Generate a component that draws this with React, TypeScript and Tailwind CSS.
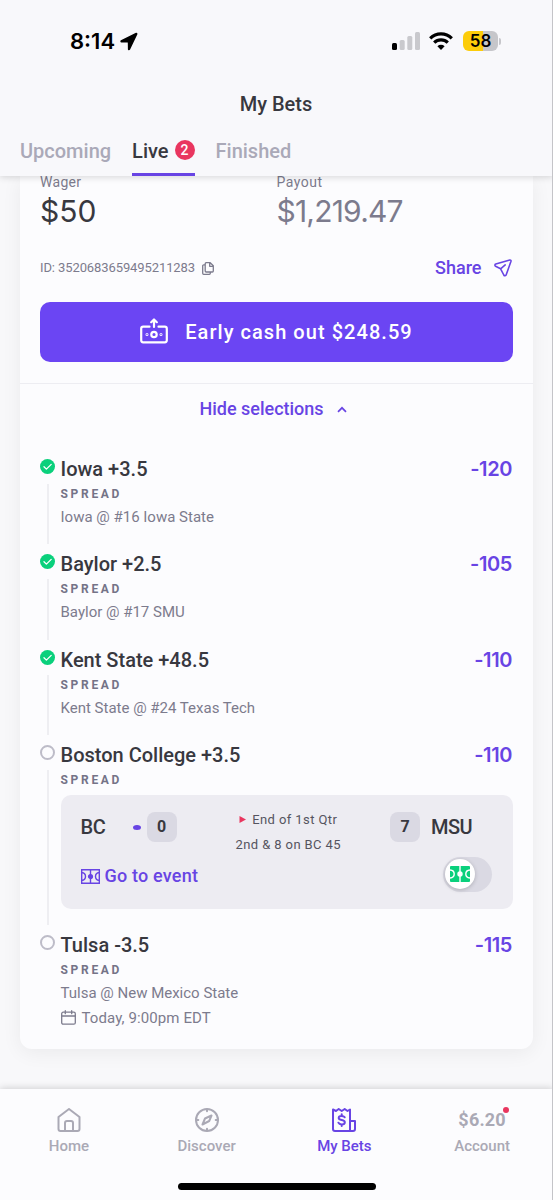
import type { ReactNode } from "react";

type Selection = {
  name: string;
  odds: string;
  matchup?: string;
  date?: string;
  won?: boolean;
  live?: boolean;
};

const selections: Selection[] = [
  { name: "Iowa +3.5", odds: "-120", matchup: "Iowa @ #16 Iowa State", won: true },
  { name: "Baylor +2.5", odds: "-105", matchup: "Baylor @ #17 SMU", won: true },
  {
    name: "Kent State +48.5",
    odds: "-110",
    matchup: "Kent State @ #24 Texas Tech",
    won: true,
  },
  { name: "Boston College +3.5", odds: "-110", live: true },
  {
    name: "Tulsa -3.5",
    odds: "-115",
    matchup: "Tulsa @ New Mexico State",
    date: "Today, 9:00pm EDT",
  },
];

function StatusBar() {
  return (
    <div className="flex h-[82px] items-center justify-between pl-[70px] pr-[52px]">
      <div className="flex items-center gap-[5px] font-[Inter] text-[22px] font-semibold text-black">
        8:14
        <svg className="h-[19px] w-[18px]" viewBox="0 0 18 19" fill="currentColor">
          <path d="M16 .8.9 8.3c-.9.5-.7 2.2.5 2.2l6 .1c.3 0 .4.1.4.4l.1 6.2c0 1.3 1.7 1.5 2.2.3L17.4 2.2c.3-.9-.5-1.8-1.4-1.4z" />
        </svg>
      </div>
      <div className="flex items-center">
        <svg className="mr-[9px] h-[18px] w-7" viewBox="0 0 28 18">
          <rect x="0" y="11" width="5" height="7" rx="1.5" fill="#000" />
          <rect x="7.7" y="8" width="5" height="10" rx="1.5" fill="#c9c9cd" />
          <rect x="15.3" y="4" width="5" height="14" rx="1.5" fill="#c9c9cd" />
          <rect x="23" y="0" width="5" height="18" rx="1.5" fill="#c9c9cd" />
        </svg>
        <svg className="mr-2.5 h-[18px] w-6" viewBox="0 0 24 18" fill="none" stroke="#000" strokeWidth="3.2">
          <path d="M1.2 6.3a15.5 15.5 0 0 1 21.6 0" />
          <path d="M5.2 10.6a9.7 9.7 0 0 1 13.6 0" />
          <path d="M12 18 8.4 14.3a5.2 5.2 0 0 1 7.2 0z" fill="#000" stroke="none" />
        </svg>
        <div className="flex h-5 w-[35px] items-center justify-center rounded-[6px] bg-linear-to-r from-[#fccc0a] from-58% to-[#c6c6ca] to-58% font-[Inter] text-[17px] font-semibold leading-5 text-black">
          58
        </div>
        <div className="ml-px h-[7px] w-0.5 rounded-r-full bg-[#c6c6ca]" />
      </div>
    </div>
  );
}

function Header() {
  return (
    <header className="relative z-10 h-44 bg-[#f8f8fb] shadow-[0_1px_7px_rgba(0,0,0,0.16)]">
      <StatusBar />
      <h1 className="pr-px pt-2 text-center text-xl font-medium text-[#38383f]">My Bets</h1>
      <nav className="flex h-[58px] gap-[21px] pl-5 pt-[5px] text-xl font-medium leading-[56px] text-[#aaa9b8]">
        <span>Upcoming</span>
        <span className="flex items-center border-b-[3px] border-[#6844e4] pt-1.5 text-[#38383f]">
          Live
          <span className="mb-0.5 ml-1.5 flex size-5 items-center justify-center rounded-full bg-[#e9365f] text-sm text-white">
            2
          </span>
        </span>
        <span>Finished</span>
      </nav>
    </header>
  );
}

function CashOutIcon() {
  return (
    <svg className="mb-[3px] h-[26px] w-7" viewBox="0 0 28 26" fill="none" stroke="currentColor" strokeWidth="2.2" strokeLinecap="round" strokeLinejoin="round">
      <path d="M9.5 8.7H3.2a2 2 0 0 0-2 2v11.6a2 2 0 0 0 2 2h21.6a2 2 0 0 0 2-2V10.7a2 2 0 0 0-2-2h-6.3M14 9V2M11.2 4.2 14 1.5l2.8 2.7" />
      <circle cx="14" cy="16.5" r="2.7" />
      <circle cx="7" cy="16.5" r="0.4" />
      <circle cx="21" cy="16.5" r="0.4" />
    </svg>
  );
}

function CopyIcon() {
  return (
    <svg className="h-[13px] w-3" viewBox="0 0 12 13" fill="none" stroke="currentColor" strokeWidth="1.3" strokeLinejoin="round">
      <path d="M4.2.7h4L11.3 3.8v5.2a1 1 0 0 1-1 1H4.2a1 1 0 0 1-1-1V1.7a1 1 0 0 1 1-1zM7.7.9v3.4h3.5" />
      <path d="M3 2.8H1.7a1 1 0 0 0-1 1v7.5a1 1 0 0 0 1 1h5.6a1 1 0 0 0 1-1V10" />
    </svg>
  );
}

function PlaneIcon() {
  return (
    <svg className="size-[18px]" viewBox="0 0 18 18" fill="none" stroke="currentColor" strokeWidth="1.6" strokeLinecap="round" strokeLinejoin="round">
      <path d="M15.8 1 1.8 5c-1.1.3-1.2 1.7-.2 2.2l5 2.600 3.200 6.200c.6 1.100 2.100 1 2.400-.2L17 2.200c.2-.8-.4-1.400-1.200-1.200zM6.600 9.800l4.600-3.900" />
    </svg>
  );
}

function PitchIcon() {
  return (
    <svg className="h-[15px] w-[19px]" viewBox="0 0 19 15" fill="none" stroke="currentColor" strokeWidth="1.4">
      <path d="M.7.7h17.6v13.6H.7zM9.5.7v13.6M.7 3.5c2.4.3 3.8 2 3.8 4s-1.4 3.7-3.8 4M18.3 3.5c-2.4.3-3.8 2-3.8 4s1.4 3.7 3.8 4" />
      <circle cx="9.5" cy="7.5" r="1.9" fill="currentColor" />
    </svg>
  );
}

function StatusDot({ won }: { won?: boolean }) {
  if (!won) {
    return <div className="size-[15px] rounded-full border-2 border-[#bdbcc8]" />;
  }
  return (
    <svg className="size-[15px]" viewBox="0 0 15 15" fill="none">
      <circle cx="7.5" cy="7.5" r="7.5" fill="#0ad07c" />
      <path d="m4 7.8 2.4 2.3 4.8-4.7" stroke="#fff" strokeWidth="1.3" strokeLinecap="round" strokeLinejoin="round" />
    </svg>
  );
}

function Score({ children }: { children: ReactNode }) {
  return (
    <span className="flex size-[30px] items-center justify-center rounded-lg bg-[#dad9e3] text-base font-bold text-[#38383f]">
      {children}
    </span>
  );
}

function LivePanel() {
  return (
    <div className="mt-[5px] h-[114px] rounded-[10px] bg-[#edecf2] pl-5 pr-[21px] pt-4">
      <div className="flex h-8 items-center justify-between">
        <div className="flex items-center">
          <span className="w-[52px] text-xl font-medium tracking-[-0.5px]">BC</span>
          <span className="mr-1.5 h-[5px] w-2 rounded-[50%] bg-[#6844e4]" />
          <Score>0</Score>
        </div>
        <div className="ml-2.5 mt-2.5 flex flex-col items-center text-[13px] leading-[25px] tracking-[0.4px] text-[#55545f]">
          <span className="flex items-center gap-1.5">
            <svg className="h-[7px] w-[7px]" viewBox="0 0 7 7" fill="#e9365f">
              <path d="M.5 0 7 3.5.5 7z" />
            </svg>
            End of 1st Qtr
          </span>
          <span>2nd &amp; 8 on BC 45</span>
        </div>
        <div className="flex w-[102px] items-center gap-[11px]">
          <Score>7</Score>
          <span className="text-xl font-medium tracking-[-0.5px]">MSU</span>
        </div>
      </div>
      <div className="mt-[13px] flex h-9 items-center justify-between">
        <div className="flex items-center gap-[5px] pt-1 text-lg font-medium tracking-[0.2px] text-[#6844e4]">
          <PitchIcon />
          Go to event
        </div>
        <div className="flex h-[35px] w-[49px] items-center rounded-full bg-[#dad9e3] pl-0.5">
          <div className="flex size-[30px] items-center justify-center rounded-full bg-white shadow-[0_1px_4px_rgba(0,0,0,0.2)]">
            <svg className="h-4 w-5" viewBox="0 0 20 16" fill="none" stroke="#fff" strokeWidth="1.4">
              <rect width="20" height="16" rx="1" fill="#0ad07c" stroke="none" />
              <path d="M10 0v16M0 4c2.6.2 4.2 1.8 4.2 4S2.6 11.8 0 12M20 4c-2.6.2-4.2 1.8-4.2 4s1.6 3.8 4.2 4" />
              <circle cx="10" cy="8" r="2" fill="#fff" />
            </svg>
          </div>
        </div>
      </div>
    </div>
  );
}

function SelectionRow({ item, last }: { item: Selection; last: boolean }) {
  return (
    <li className={item.live ? "flex h-[189.5px]" : "flex h-[95.5px]"}>
      <div className="flex w-[20.5px] shrink-0 flex-col items-start pt-0.5">
        <StatusDot won={item.won} />
        {!last && <div className="mb-2 ml-[6.5px] mt-2.5 w-[2.5px] flex-1 bg-[#eeeef2]" />}
      </div>
      <div className="min-w-0 flex-1 text-[#38383f]">
        <div className="flex h-6 items-center justify-between text-xl font-medium">
          <span>{item.name}</span>
          <span className="pr-px font-[Inter] text-xl font-semibold tracking-[-0.4px] text-[#6844e4]">
            {item.odds}
          </span>
        </div>
        <p className="mt-[3px] text-xs font-bold leading-5 tracking-[2.7px] text-[#747387]">SPREAD</p>
        {item.matchup && (
          <p className="mt-[3px] text-[15px] leading-5 text-[#7c7b8d]">{item.matchup}</p>
        )}
        {item.date && (
          <p className="mt-[5px] flex items-center gap-1.5 text-[15px] leading-5 tracking-[0.1px] text-[#7c7b8d]">
            <svg className="h-[15px] w-[15px]" viewBox="0 0 15 15" fill="none" stroke="currentColor" strokeWidth="1.3" strokeLinecap="round">
              <rect x=".7" y="2.2" width="13.6" height="12" rx="1.5" />
              <path d="M.7 6h13.6M4.3.7v3M10.7.7v3" />
            </svg>
            {item.date}
          </p>
        )}
        {item.live && <LivePanel />}
      </div>
    </li>
  );
}

function BetCard() {
  return (
    <main className="mx-5 h-[873px] rounded-b-[12px] bg-[#fcfcfe] shadow-[0_4px_20px_rgba(0,0,0,0.06)]">
      <div className="px-5">
        <div className="flex">
          <div className="w-[236.5px]">
            <p className="h-[17px] text-sm leading-3 tracking-[0.3px] text-[#7c7b8d]">Wager</p>
            <p className="font-[Inter] text-[30px] leading-9 text-[#38383f]">$50</p>
          </div>
          <div>
            <p className="h-[17px] text-sm leading-3 tracking-[0.5px] text-[#7c7b8d]">Payout</p>
            <p className="font-[Inter] text-[30px] leading-9 tracking-[-0.8px] text-[#7c7b8d]">$1,219.47</p>
          </div>
        </div>
        <div className="mt-[27px] flex h-6 items-center justify-between">
          <p className="flex items-center gap-[7px] text-[13px] tracking-[-0.1px] text-[#7c7b8d]">
            ID: 3520683659495211283
            <CopyIcon />
          </p>
          <p className="flex items-center gap-3 pr-[1.5px] text-lg font-medium text-[#6844e4]">
            Share
            <PlaneIcon />
          </p>
        </div>
        <button className="mt-[22px] flex h-[60px] w-full items-center justify-center gap-[17px] rounded-[10px] bg-[#6b45f3] text-xl font-medium tracking-[1.05px] text-white">
          <CashOutIcon />
          Early cash out $248.59
        </button>
      </div>
      <div className="mt-[21px] flex h-[52px] items-center justify-center gap-[13px] border-t border-[#ededf2] pb-px pr-[7px] text-lg font-medium text-[#6844e4]">
        Hide selections
        <svg className="h-[7px] w-[10px]" viewBox="0 0 10 7" fill="none" stroke="currentColor" strokeWidth="1.7">
          <path d="m1 5.8 4-4 4 4" />
        </svg>
      </div>
      <ul className="px-5 pt-[21.75px]">
        {selections.map((item, i) => (
          <SelectionRow key={item.name} item={item} last={i === selections.length - 1} />
        ))}
      </ul>
    </main>
  );
}

function NavItem({ label, active, children }: { label: string; active?: boolean; children: ReactNode }) {
  return (
    <div
      className={`flex flex-1 flex-col items-center text-[15px] font-medium ${
        active ? "text-[#6844e4]" : "text-[#aaa9b5]"
      }`}
    >
      <div className="flex h-7 items-center">{children}</div>
      <span className="mt-0.5 leading-5">{label}</span>
    </div>
  );
}

function BottomNav() {
  return (
    <footer className="relative mt-auto flex h-[111px] flex-col bg-[#fcfcfe] shadow-[0_-1px_7px_rgba(0,0,0,0.16)]">
      <nav className="flex pr-0.5 pt-[17px]">
        <NavItem label="Home">
          <svg className="size-6" viewBox="0 0 24 24" fill="none" stroke="currentColor" strokeWidth="2" strokeLinejoin="round">
            <path d="M1.5 9 12 1l10.5 8v12a2 2 0 0 1-2 2h-17a2 2 0 0 1-2-2z" />
            <path d="M8 23v-8a2 2 0 0 1 2-2h4a2 2 0 0 1 2 2v8" />
          </svg>
        </NavItem>
        <NavItem label="Discover">
          <svg className="size-6" viewBox="0 0 24 24" fill="none" stroke="currentColor" strokeWidth="2" strokeLinecap="round" strokeLinejoin="round">
            <circle cx="12" cy="12" r="11" />
            <path d="M16.5 7.5 14.2 13l-6.7 3.5L10 10.5zM12 1.5v1.8M12 20.7v1.8M1.5 12h1.8M20.7 12h1.8" />
          </svg>
        </NavItem>
        <NavItem label="My Bets" active>
          <svg className="size-6" viewBox="0 0 24 24" fill="none" stroke="currentColor" strokeWidth="2" strokeLinejoin="round" strokeLinecap="round">
            <path d="M1 1.5 4 3l2.7-2 3 2 3-2 2.8 2L18 1.500V23H3a2 2 0 0 1-2-2zM18 13h5v8a2 2 0 0 1-2 2h-3" />
            <path d="M12.7 9.3c-.6-1-1.6-1.4-3.1-1.4-1.7 0-2.9.7-2.9 2 0 3 6.1 1.2 6.1 4.3 0 1.4-1.3 2.2-3.1 2.2-1.6 0-2.8-.6-3.3-1.7M9.7 6.3v1.6M9.7 16.5v1.6" />
          </svg>
        </NavItem>
        <NavItem label="Account">
          <span className="relative text-lg font-bold tracking-[0.2px]">
            $6.20
            <span className="absolute -right-[3px] top-px size-1.5 rounded-full bg-[#e9365f]" />
          </span>
        </NavItem>
      </nav>
      <div className="mx-auto mb-2.5 mt-auto h-[7px] w-[198px] rounded-full bg-black" />
    </footer>
  );
}

export default function App() {
  return (
    <div className="relative flex h-[1200px] w-[553px] flex-col overflow-hidden bg-[#f8f8fa] font-[Roboto,sans-serif]">
      <Header />
      <BetCard />
      <BottomNav />
      <div className="absolute inset-y-0 right-0 z-20 w-px bg-[#c4c4c8]" />
    </div>
  );
}
